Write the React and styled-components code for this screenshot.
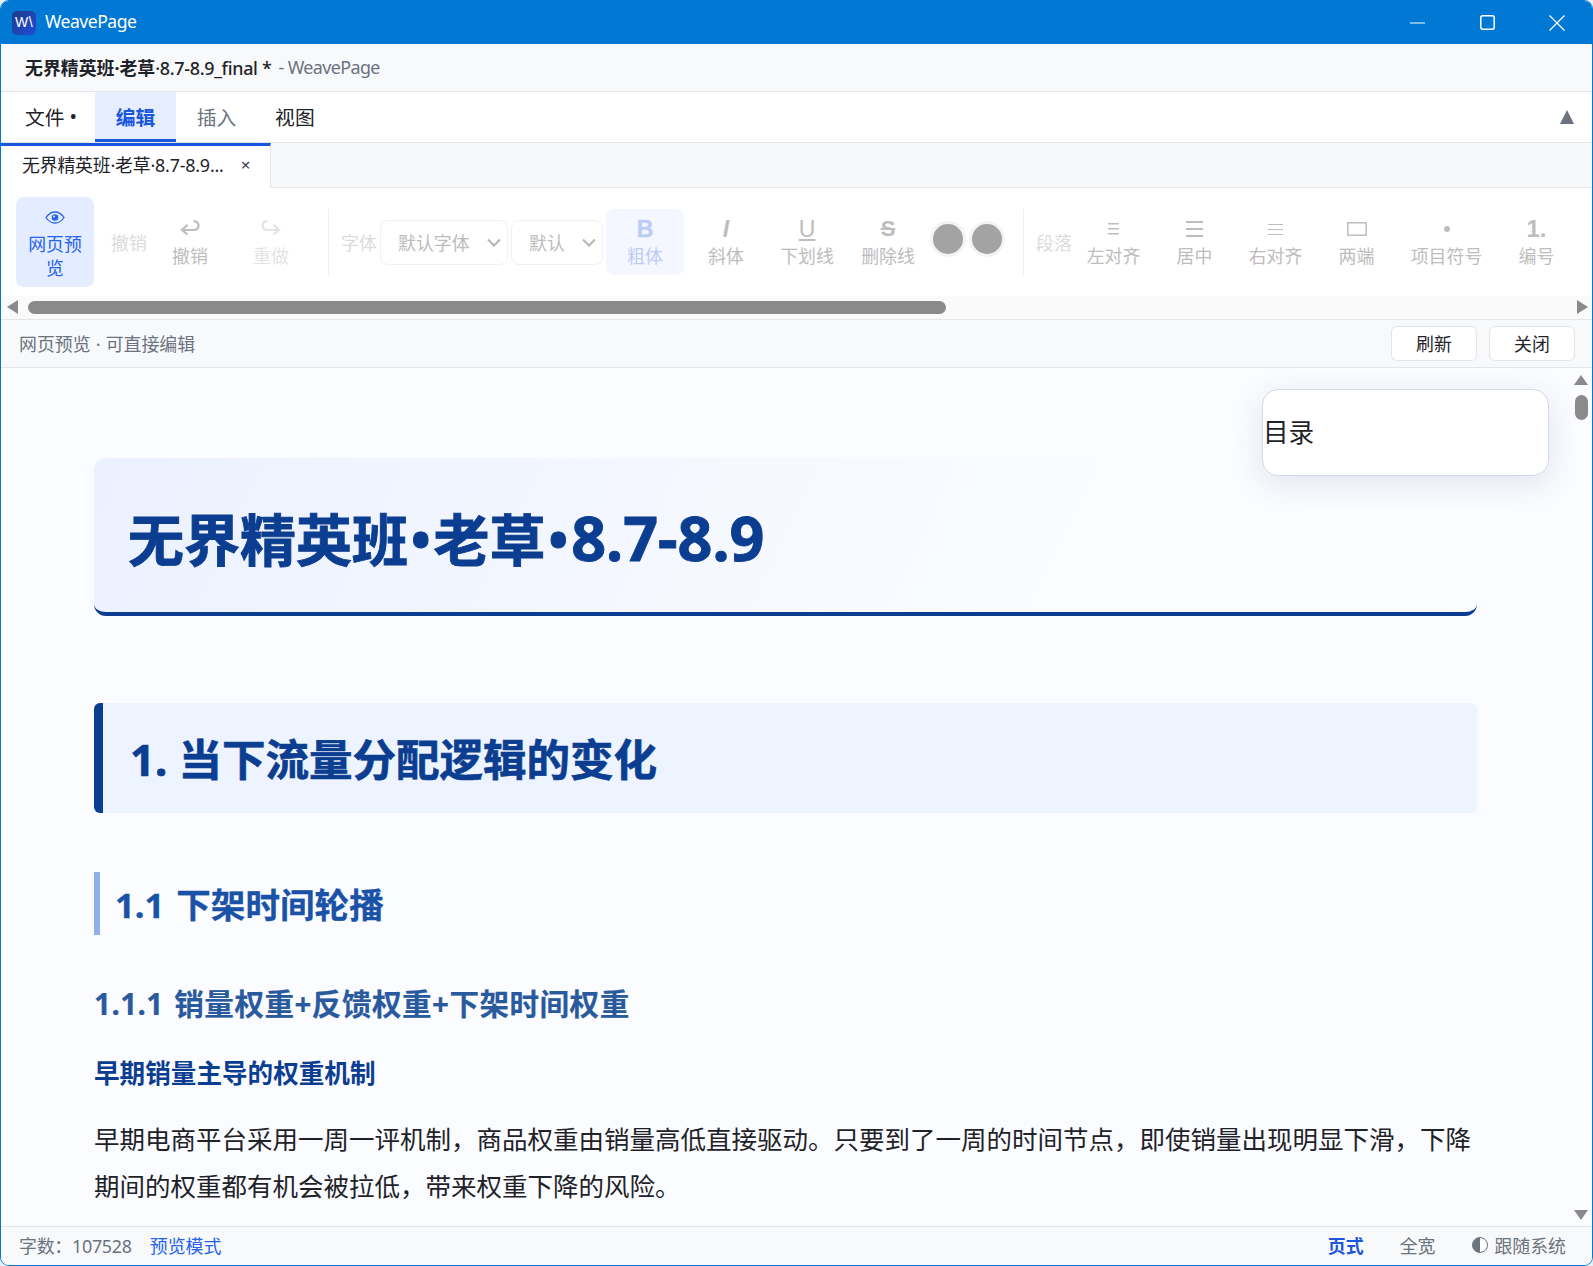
import React from 'react';
import styled, { createGlobalStyle } from 'styled-components';

const Global = createGlobalStyle`
  html, body { margin: 0; padding: 0; background: #e9edf3; }
  * { box-sizing: border-box; }
  body { font-family: "Noto Sans", "Noto Sans CJK SC", sans-serif; }
`;

const Frame = styled.div`
  width: 1593px; height: 1266px; display: flex; flex-direction: column;
  border: 1px solid #0078d4; border-radius: 9px; overflow: hidden; background: #fff;
  font-size: 17.9px; color: #1f2329;
`;
const TitleBar = styled.header`
  height: 43px; flex: none; background: #0078d4; color: #fff; display: flex; align-items: center;
  padding-left: 11px;
`;
const Logo = styled.div`
  width: 24px; height: 24px; border-radius: 5px; flex: none; display: flex; align-items: center; justify-content: center;
  background: linear-gradient(135deg, #1e3a8a, #1d4ed8); color: #fff;
  font: 400 14px "Liberation Sans", sans-serif; letter-spacing: .5px; padding-bottom: 2px;
`;
const AppName = styled.span`
  margin-left: 9px; font-size: 17.6px; flex: 1; letter-spacing: -.5px; padding-bottom: 4px;
`;
const WinBtn = styled.button`
  width: 70px; height: 43px; border: 0; padding: 0; background: none; color: #fff;
  display: flex; align-items: center; justify-content: center; flex: none;
`;
const SubBar = styled.div`
  height: 48px; flex: none; background: #f8f9fb; border-bottom: 1px solid #e3e5e9;
  display: flex; align-items: center; padding: 0 0 2px 24px; font-size: 17.9px;
`;
const DocName = styled.strong`
  font-weight: 700; color: #1f2329; margin-right: 7px;
`;
const DocSuffix = styled.span`
  font-weight: 500; letter-spacing: -.3px;
`;
const AppSuffix = styled.span`
  color: #6b7280; letter-spacing: -.6px;
`;
const MenuBar = styled.nav`
  height: 51px; flex: none; background: #fff; border-bottom: 1px solid #e3e5e9; display: flex; align-items: stretch;
  font-size: 19.8px;
`;
const MenuItem = styled.div`
  display: flex; align-items: center; padding: 2px ${p => p.$muted ? 18.2 : 20.7}px 0 20.7px; height: 50px; white-space: nowrap;
  color: ${p => p.$active ? '#1a56db' : p.$muted ? '#6b7280' : '#1f2329'};
  background: ${p => p.$active ? '#e6edff' : 'transparent'};
  border-bottom: 3px solid ${p => p.$active ? '#1a56db' : 'transparent'};
  font-weight: ${p => p.$active ? 700 : 400};
`;
const FileMenu = styled(MenuItem)`
  width: 94px; padding-left: 24px; padding-right: 0; gap: 5px; flex: none;
`;
const Collapse = styled.div`
  margin-left: auto; margin-right: 18px; align-self: center; width: 0; height: 0;
  border-left: 7.5px solid transparent; border-right: 7.5px solid transparent; border-bottom: 14px solid #6b7280;
`;
const TabStrip = styled.div`
  height: 45px; flex: none; background: #f7f8fa; border-bottom: 1px solid #e3e5e9; display: flex;
`;
const DocTab = styled.div`
  width: 270px; background: #fff; border-top: 3px solid #1a56db; border-right: 1px solid #e3e5e9;
  display: flex; align-items: center; padding: 0 0 6px 21px; margin-bottom: -1px; font-size: 17.9px; color: #1f2329; letter-spacing: -.2px;
`;
const TabClose = styled.span`
  margin-left: 17px; font-size: 17px; line-height: 1; color: #374151;
`;
const Toolbar = styled.div`
  height: 108px; flex: none; background: #fff; display: flex; align-items: center; padding-left: 15px;
`;
const PreviewBtn = styled.button`
  width: 78px; height: 90px; border: 0; padding: 14px 6px 0; border-radius: 8px; background: #e4ecff; color: #2563eb;
  font: inherit; font-size: 17.9px; line-height: 24px; display: flex; flex-direction: column; align-items: center; gap: 8px; flex: none;
`;
const GroupLabel = styled.span`
  flex: none; color: #dcdcdc; font-size: 17.9px; width: 36px; white-space: nowrap;
  margin: 0 ${p => p.$after ?? 4}px 0 ${p => p.$before || 0}px;
`;
const ToolBtn = styled.div`
  flex: none; width: ${p => p.$w || 78}px; height: 66px; margin-right: 3px; border-radius: 8px; display: flex; flex-direction: column;
  align-items: center; font-size: 17.9px; line-height: 24px; white-space: nowrap; padding-top: 5px;
  color: ${p => p.$on ? '#bccdf5' : p.$off ? '#e4e4e4' : '#bdbdbd'};
  background: ${p => p.$on ? '#f4f7ff' : 'transparent'};
`;
const IconBox = styled.div`
  height: 30px; width: 100%; display: flex; align-items: center; justify-content: center; line-height: 1; flex: none;
  font-family: "Liberation Sans", sans-serif; font-size: 20px;
`;
const GlyphB = styled.span` font-weight: 700; font-size: 23px; -webkit-text-stroke: .4px #bccdf5; `;
const GlyphI = styled.span` font-style: italic; font-weight: 700; font-size: 23px; `;
const GlyphU = styled.span` text-decoration: underline; text-decoration-thickness: 2px; font-size: 23px; text-underline-offset: 2px; `;
const GlyphS = styled.span` text-decoration: line-through; font-size: 22px; font-weight: 700; `;
const GlyphNum = styled.span` font-weight: 700; font-size: 24px; `;
const Separator = styled.i`
  flex: none; width: 1px; height: 66px; background: #efefef; margin: 0 12px 0 15px;
`;
const SelectBox = styled.div`
  flex: none; height: 45px; width: ${p => p.$w}px; margin-right: 3px; border: 1px solid #f1f1f1; border-radius: 8px;
  display: flex; align-items: center; justify-content: space-between; padding: 0 6px 0 ${p => p.$pl}px; color: #bcbcbc; font-size: 17.9px;
`;
const Swatch = styled.i`
  flex: none; width: 36px; height: 36px; border-radius: 50%; background: #a3a3a3; border: 3px solid #f3f3f3; margin-right: 3px; margin-top: -6px;
`;
const HScroll = styled.div`
  height: 24px; flex: none; background: #fafafa; border-bottom: 1px solid #e3e5e9; display: flex; align-items: center; padding: 0 4px 1px 6px;
`;
const Thumb = styled.div`
  flex: none; width: 918px; height: 13px; border-radius: 7px; background: #8a8a8a; margin-left: 10px;
`;
const ArrowL = styled.i`
  flex: none; width: 0; height: 0; border-top: 7px solid transparent; border-bottom: 7px solid transparent; border-right: 11px solid #8a8a8a;
`;
const ArrowR = styled.i`
  flex: none; width: 0; height: 0; margin-left: auto; border-top: 7px solid transparent; border-bottom: 7px solid transparent; border-left: 11px solid #8a8a8a;
`;
const PreviewBar = styled.div`
  height: 48px; flex: none; background: #f8f9fb; border-bottom: 1px solid #e3e5e9; display: flex; align-items: center;
  padding: 0 17px 0 18px; color: #6b7280; font-size: 17.9px;
`;
const PreviewText = styled.span` flex: 1; padding-bottom: 2px; word-spacing: .5px; `;
const BarBtn = styled.button`
  width: 86px; height: 35px; background: #fff; border: 1px solid #e3e5e9; border-radius: 6px; font: inherit; font-size: 17.9px; color: #1f2329;
  margin-left: 12px; padding: 0 0 2px;
`;
const Content = styled.main`
  position: relative; flex: 1; min-height: 0; overflow: hidden; background: #fbfcff; display: flex;
`;
const Page = styled.article`
  flex: 1; min-width: 0; padding: 90px 95px 0 93px; overflow: hidden;
`;
const Toc = styled.aside`
  position: absolute; top: 21px; right: 43px; width: 287px; height: 87px; background: #fff; border: 1px solid #d2dae8; border-radius: 16px;
  box-shadow: 0 8px 32px rgba(30,60,120,.12); display: flex; align-items: center; font-size: 25.6px; color: #1f2329; padding-bottom: 3px;
`;
const Hero = styled.header`
  height: 158px; border-radius: 12px; border-bottom: 4px solid #0b3d91; background: linear-gradient(115deg, #ebf1ff 0%, #fbfcff 70%);
  display: flex; align-items: center; padding: 6px 0 0 34px;
`;
const HeroTitle = styled.h1`
  margin: 0; font-size: 56px; font-weight: 700; color: #0b3d91; line-height: 68px; -webkit-text-stroke: .9px #0b3d91; white-space: nowrap;
`;
const HeroDot = styled.span`
  font-size: 52px; vertical-align: 2px; margin: 0 3px;
`;
const HeroNum = styled.span`
  font-size: 61px;
`;
const Section = styled.div`
  margin-top: 87px; height: 110px; background: #eef4ff; border-left: 9px solid #0b3d91; border-radius: 6px; display: flex; align-items: center; padding-left: 27px;
`;
const SectionTitle = styled.h2`
  margin: 0; font-size: 43.5px; font-weight: 700; color: #0b3d91; line-height: 1.2; padding-top: 2px; -webkit-text-stroke: .7px #0b3d91;
`;
const Sub = styled.h3`
  margin: 59px 0 0; height: 63px; border-left: 6px solid #8fb0e8; padding: 0 0 2px 15px; display: flex; align-items: center;
  font-size: 34.6px; font-weight: 700; color: #1a52a8; -webkit-text-stroke: .3px #1a52a8; word-spacing: 3px;
`;
const SubSub = styled.h4`
  margin: 45px 0 0; font-size: 29.6px; font-weight: 700; color: #2a5a9e; line-height: 48px; height: 48px; letter-spacing: .45px; word-spacing: 2.5px; -webkit-text-stroke: .2px #2a5a9e;
`;
const Strong = styled.h5`
  margin: 22px 0 0; font-size: 25.6px; font-weight: 700; color: #0b3d91; line-height: 48px; height: 48px;
`;
const Para = styled.p`
  margin: 18px 0 0; font-size: 25.5px; line-height: 47px; color: #1f2329; width: 1390px;
`;
const VScroll = styled.div`
  flex: none; width: 18px; margin-right: 2px; display: flex; flex-direction: column; align-items: center; padding: 7px 0 6px 0;
`;
const ArrowU = styled.i`
  width: 0; height: 0; flex: none; border-left: 7px solid transparent; border-right: 7px solid transparent; border-bottom: 10px solid #8a8a8a;
`;
const ArrowD = styled.i`
  width: 0; height: 0; flex: none; margin-top: auto; border-left: 7px solid transparent; border-right: 7px solid transparent; border-top: 10px solid #8a8a8a;
`;
const VThumb = styled.div`
  width: 13px; height: 25px; flex: none; border-radius: 7px; background: #8a8a8a; margin-top: 10px;
`;
const StatusBar = styled.footer`
  height: 39px; flex: none; background: #f8f9fb; border-top: 1px solid #e3e5e9; display: flex; align-items: center; padding: 0 26px 2px 18px;
  font-size: 17.9px; color: #6b7280;
`;
const WordCount = styled.span`
  letter-spacing: -.25px;
`;
const StatusMode = styled.span`
  margin-left: 18px; color: #2563eb; flex: 1;
`;
const StatusOpt = styled.span`
  margin-left: 36px; color: ${p => p.$on ? '#1a56db' : '#6b7280'}; font-weight: ${p => p.$on ? 700 : 400};
`;
const ThemeOpt = styled.span`
  margin-left: 37px; display: flex; align-items: center; gap: 6px;
`;

const Ico = styled.svg` display: block; flex: none; `;
const UndoIco = styled(Ico)`
  margin-bottom: 3px;
  transform: ${p => p.$flip ? 'scaleX(-1)' : 'none'};
`;

const Eye = () => (
  <Ico width="20" height="13" viewBox="0 0 20 13" fill="none" stroke="currentColor">
    <path d="M1 6.500C3.500 2.800 6.500 1 10 1s6.500 1.800 9 5.500c-2.500 3.700-5.500 5.500-9 5.500s-6.500-1.800-9-5.500z" strokeWidth="1.300" />
    <circle cx="10" cy="6.500" r="3.300" fill="currentColor" stroke="none" />
    <circle cx="9" cy="5.500" r="1" fill="#e4ecff" stroke="none" />
  </Ico>
);
const Undo = ({ flip }) => (
  <UndoIco $flip={flip} width="20" height="15" viewBox="0 0 20 15" fill="none" stroke="currentColor" strokeWidth="2.200">
    <path d="M2 10h11c3.500 0 5.500-2 5.500-4.500S16.500 1.500 13.500 1.200" />
    <path d="M7.500 4.800 2 10l5.500 4.500" />
  </UndoIco>
);
const Chevron = () => (
  <Ico width="14" height="9" viewBox="0 0 14 9" fill="none" stroke="#b5b5b5" strokeWidth="2">
    <path d="M1 1.500 7 7.500l6-6" />
  </Ico>
);
const Lines = ({ w, gap, sw }) => (
  <Ico width={w} height={gap * 2 + sw} viewBox={`0 0 ${w} ${gap * 2 + sw}`} stroke="currentColor" strokeWidth={sw}>
    {[0, 1, 2].map(i => <line key={i} x1="0" x2={w} y1={sw / 2 + gap * i} y2={sw / 2 + gap * i} />)}
  </Ico>
);
const HalfCircle = () => (
  <Ico width="16" height="16" viewBox="0 0 16 16">
    <circle cx="8" cy="8" r="7.500" fill="#fff" stroke="#6b7280" strokeWidth="1" />
    <path d="M8 .5a7.500 7.500 0 0 0 0 15z" fill="#6b7280" />
  </Ico>
);

export default function App() {
  return (
    <Frame>
      <Global />
      <TitleBar>
        <Logo>W\</Logo>
        <AppName>WeavePage</AppName>
        <WinBtn>
          <Ico width="15" height="2" viewBox="0 0 15 2" stroke="#fff" strokeWidth="1.200"><line x1="0" x2="15" y1="1" y2="1" /></Ico>
        </WinBtn>
        <WinBtn>
          <Ico width="15" height="15" viewBox="0 0 15 15" fill="none" stroke="#fff" strokeWidth="1.500"><rect x=".8" y=".8" width="13.400" height="13.400" rx="2" /></Ico>
        </WinBtn>
        <WinBtn>
          <Ico width="16" height="16" viewBox="0 0 16 16" fill="none" stroke="#fff" strokeWidth="1.200"><path d="M.5.5l15 15M15.500.5l-15 15" /></Ico>
        </WinBtn>
      </TitleBar>
      <SubBar>
        <DocName>无界精英班·老草<DocSuffix>·8.7-8.9_final *</DocSuffix></DocName>
        <AppSuffix>- WeavePage</AppSuffix>
      </SubBar>
      <MenuBar>
        <FileMenu>文件<span>•</span></FileMenu>
        <MenuItem $active>编辑</MenuItem>
        <MenuItem $muted>插入</MenuItem>
        <MenuItem>视图</MenuItem>
        <Collapse />
      </MenuBar>
      <TabStrip>
        <DocTab>无界精英班·老草·8.7-8.9...<TabClose>×</TabClose></DocTab>
      </TabStrip>
      <Toolbar>
        <PreviewBtn><Eye /><span>网页预览</span></PreviewBtn>
        <GroupLabel $before={17}>撤销</GroupLabel>
        <ToolBtn><IconBox><Undo /></IconBox>撤销</ToolBtn>
        <ToolBtn $off><IconBox><Undo flip /></IconBox>重做</ToolBtn>
        <Separator />
        <GroupLabel $after={3}>字体</GroupLabel>
        <SelectBox $w={128} $pl={17}>默认字体<Chevron /></SelectBox>
        <SelectBox $w={92} $pl={17}>默认<Chevron /></SelectBox>
        <ToolBtn $on><IconBox><GlyphB>B</GlyphB></IconBox>粗体</ToolBtn>
        <ToolBtn><IconBox><GlyphI>I</GlyphI></IconBox>斜体</ToolBtn>
        <ToolBtn><IconBox><GlyphU>U</GlyphU></IconBox>下划线</ToolBtn>
        <ToolBtn><IconBox><GlyphS>S</GlyphS></IconBox>删除线</ToolBtn>
        <Swatch />
        <Swatch />
        <Separator />
        <GroupLabel $after={2.5}>段落</GroupLabel>
        <ToolBtn><IconBox><Lines w={11} gap={5} sw={1.6} /></IconBox>左对齐</ToolBtn>
        <ToolBtn><IconBox><Lines w={17} gap={7} sw={2} /></IconBox>居中</ToolBtn>
        <ToolBtn><IconBox><Lines w={15} gap={5} sw={1} /></IconBox>右对齐</ToolBtn>
        <ToolBtn>
          <IconBox>
            <Ico width="20" height="14" viewBox="0 0 20 14" fill="none" stroke="currentColor" strokeWidth="1.500"><rect x=".8" y=".8" width="18.400" height="12.400" /></Ico>
          </IconBox>两端
        </ToolBtn>
        <ToolBtn $w={96}><IconBox><Ico width="6" height="6" viewBox="0 0 6 6"><circle cx="3" cy="3" r="3" fill="currentColor" /></Ico></IconBox>项目符号</ToolBtn>
        <ToolBtn><IconBox><GlyphNum>1.</GlyphNum></IconBox>编号</ToolBtn>
      </Toolbar>
      <HScroll>
        <ArrowL /><Thumb /><ArrowR />
      </HScroll>
      <PreviewBar>
        <PreviewText>网页预览 · 可直接编辑</PreviewText>
        <BarBtn>刷新</BarBtn>
        <BarBtn>关闭</BarBtn>
      </PreviewBar>
      <Content>
        <Page>
          <Hero><HeroTitle>无界精英班<HeroDot>•</HeroDot>老草<HeroDot>•</HeroDot><HeroNum>8.7-8.9</HeroNum></HeroTitle></Hero>
          <Section><SectionTitle>1. 当下流量分配逻辑的变化</SectionTitle></Section>
          <Sub>1.1 下架时间轮播</Sub>
          <SubSub>1.1.1 销量权重+反馈权重+下架时间权重</SubSub>
          <Strong>早期销量主导的权重机制</Strong>
          <Para>早期电商平台采用一周一评机制，商品权重由销量高低直接驱动。只要到了一周的时间节点，即使销量出现明显下滑，下降期间的权重都有机会被拉低，带来权重下降的风险。</Para>
        </Page>
        <VScroll>
          <ArrowU /><VThumb /><ArrowD />
        </VScroll>
        <Toc>目录</Toc>
      </Content>
      <StatusBar>
        <WordCount>字数：107528</WordCount>
        <StatusMode>预览模式</StatusMode>
        <StatusOpt $on>页式</StatusOpt>
        <StatusOpt>全宽</StatusOpt>
        <ThemeOpt><HalfCircle />跟随系统</ThemeOpt>
      </StatusBar>
    </Frame>
  );
}
